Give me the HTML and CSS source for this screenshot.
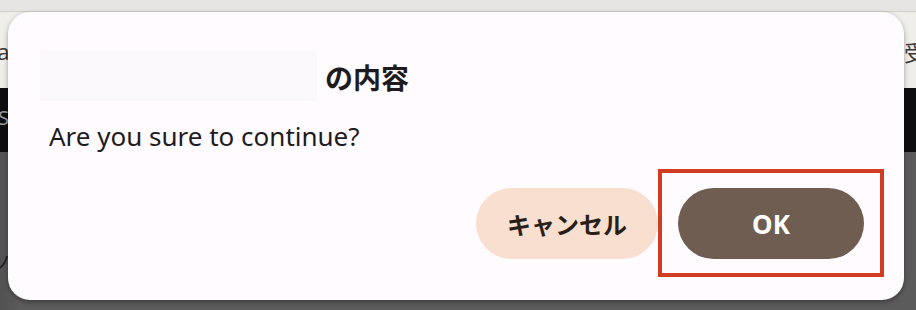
FILE: index.html
```html
<!DOCTYPE html>
<html lang="ja">
<head>
<meta charset="utf-8">
<title>Dialog</title>
<link rel="stylesheet" href="styles.css">
</head>
<body>
<div class="page">
  <div class="topbar"></div>
  <div class="band-light">
    <span class="peek peek-left">Ya</span>
    <span class="peek peek-right">受</span>
  </div>
  <div class="band-dark">
    <span class="peek-dark">SE</span>
  </div>
  <div class="band-dim">
    <span class="peek-dim">ノ</span>
  </div>
</div>

<div class="dialog" role="dialog" aria-labelledby="dlg-title">
  <div class="dialog-title" id="dlg-title">
    <span class="redacted"></span>
    <span class="title-text">の内容</span>
  </div>
  <p class="dialog-body">Are you sure to continue?</p>
  <div class="dialog-actions">
    <button class="btn btn-cancel" type="button">キャンセル</button>
    <div class="highlight">
      <button class="btn btn-ok" type="button">OK</button>
    </div>
  </div>
</div>
</body>
</html>
```

FILE: styles.css
```css
html, body {
  margin: 0;
  padding: 0;
}

body {
  width: 916px;
  height: 310px;
  overflow: hidden;
  position: relative;
  font-family: "Noto Sans", "Noto Sans CJK JP", sans-serif;
  background: #5b5b5b;
}

.page {
  display: flex;
  flex-direction: column;
  height: 310px;
}

.topbar {
  height: 11px;
  background: #e7e5e3;
  border-bottom: 1px solid #d2cec9;
}

.band-light {
  height: 76px;
  background: #f0eeeb;
  display: flex;
  justify-content: space-between;
  align-items: flex-start;
}

.peek {
  font-size: 22px;
  line-height: 26px;
  color: #3a3a3a;
  margin-top: 26px;
}

.peek-left {
  margin-left: -14px;
}

.peek-right {
  margin-right: -10px;
  font-family: "Noto Sans CJK JP", sans-serif;
}

.band-dark {
  height: 64px;
  background: #0e0e10;
  display: flex;
  align-items: center;
}

.peek-dark {
  font-size: 20px;
  color: #9a9a9a;
  margin-left: -2px;
  margin-top: -6px;
}

.band-dim {
  flex: 1;
  background: linear-gradient(90deg, #525252 0px, #5b5b5b 20px);
  position: relative;
}

.peek-dim {
  display: block;
  font-family: "Noto Sans CJK JP", sans-serif;
  font-size: 20px;
  color: #1e1e1e;
  margin-top: 96px;
  margin-left: -8px;
}

.dialog {
  position: absolute;
  left: 8px;
  top: 12px;
  width: 896px;
  height: 288px;
  box-sizing: border-box;
  background: #fffbfe;
  border-radius: 22px;
  box-shadow: 0 2px 5px rgba(0, 0, 0, 0.35);
  padding: 38px 20px 23px 32px;
  display: flex;
  flex-direction: column;
}

.dialog-title {
  display: flex;
  align-items: center;
  height: 51px;
  gap: 8px;
}

.redacted {
  width: 277px;
  height: 51px;
  background: #faf8fa;
}

.title-text {
  font-family: "Noto Sans CJK JP", sans-serif;
  font-size: 28px;
  font-weight: 700;
  color: #1d1b1e;
  line-height: 36px;
  margin-top: 3px;
}

.dialog-body {
  margin: 17px 0 0 9px;
  font-size: 26px;
  line-height: 36px;
  color: #1d1b1e;
}

.dialog-actions {
  margin-top: 15px;
  display: flex;
  justify-content: flex-end;
  align-items: center;
}

.btn {
  border: none;
  border-radius: 36px;
  height: 71px;
  padding: 0;
  cursor: pointer;
  font-weight: 700;
}

.btn-cancel {
  width: 182px;
  background: #f8dfcf;
  color: #2a1f18;
  font-family: "Noto Sans CJK JP", sans-serif;
  font-size: 24px;
}

.highlight {
  border: 4px solid #d23c21;
  padding: 15px 16px 14px 16px;
  display: flex;
}

.btn-ok {
  width: 186px;
  background: #6e5d50;
  color: #ffffff;
  font-family: "Noto Sans", sans-serif;
  font-size: 26px;
}
```
